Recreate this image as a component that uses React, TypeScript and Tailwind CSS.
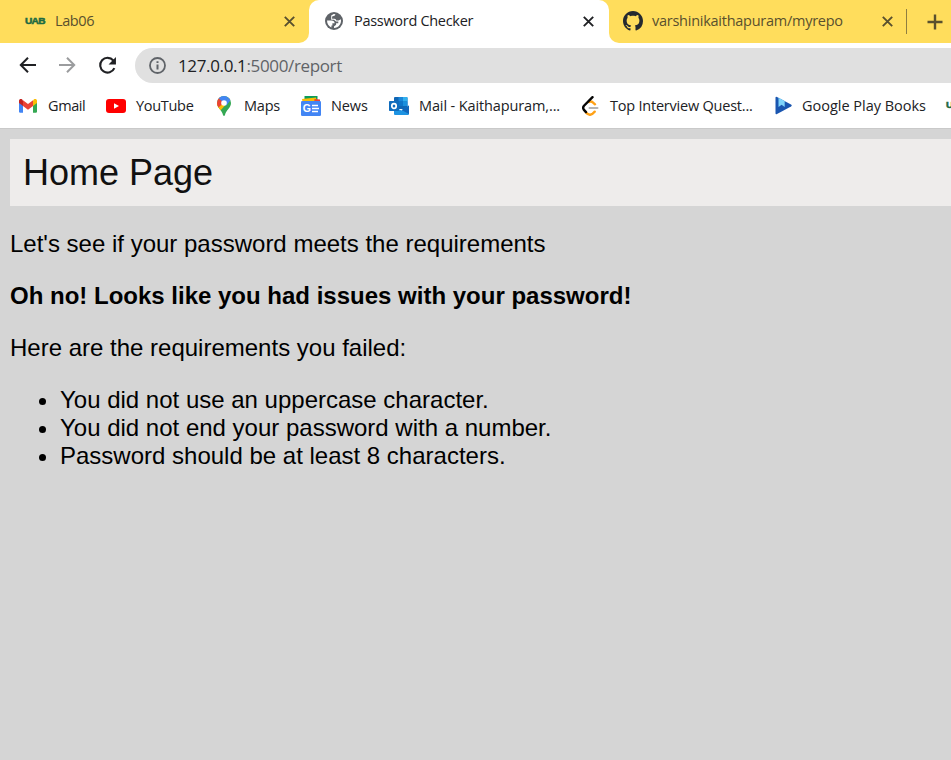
import React from 'react';

type IconProps = { className: string };

function Uab() {
  return (
    <span className="flex h-2 w-5 shrink-0 items-center">
      <span className="origin-left scale-x-[1.12] font-['Liberation_Sans',Arial,sans-serif] text-[9px] font-black leading-none tracking-[-0.6px] text-[#1e6b42] [-webkit-text-stroke:0.5px_#1e6b42]">
        UAB
      </span>
    </span>
  );
}

function Close({ className }: IconProps) {
  return (
    <svg viewBox="0 0 11 11" className={className} fill="none" stroke="currentColor" strokeWidth="1.9">
      <path d="M.8.8l9.400 9.400M10.200.8L.8 10.200" />
    </svg>
  );
}

function Globe({ className }: IconProps) {
  return (
    <svg viewBox="0 0 18 18" className={className}>
      <circle cx="9" cy="9" r="9" fill="#5f6368" />
      <path d="M2 8.600h4.200c2.300 0 3.400 1 3.400 2.700H7.400v2.200h-1v1.900C3.700 14.300 2 12 2 8.600z" fill="#fff" />
      <path d="M10.400 2.100V4.200c0 .7-.5 1.200-1.200 1.200H7.800v1.800h2.400c.8 0 1.400.5 1.400 1.300v.6h1.600c1 0 1.700-.5 2.600-1.400C16.700 12 13.500 16 9 16v-1.500l2.300-1.800" fill="none" />
      <path d="M8.700 2q1 0 1.700.2-.1 1.600-1.800 1.900L7.100 4.500v2.300h2.300q1.700.2 1.900 1.700h2.300l2.300-1.200C16.700 12 13.500 15.900 9 16v-1.500l2.100-1.800v-1.400h2.200V9.600h-2.200L9 7.800H6.200V3.500z" fill="#fff" />
    </svg>
  );
}

function Github({ className }: IconProps) {
  return (
    <svg viewBox="0 0 16 16" className={className} fill="#24292f">
      <path d="M8 0C3.580 0 0 3.580 0 8c0 3.540 2.290 6.530 5.470 7.590.4.070.55-.17.55-.38 0-.19-.01-.82-.01-1.490-2.010.37-2.530-.49-2.690-.94-.09-.23-.48-.94-.82-1.130-.28-.15-.68-.52-.01-.53.63-.01 1.080.58 1.230.82.72 1.210 1.870.87 2.330.66.070-.52.28-.87.51-1.070-1.780-.2-3.640-.89-3.640-3.950 0-.87.31-1.590.82-2.150-.08-.2-.36-1.020.08-2.120 0 0 .67-.21 2.200.82.64-.18 1.320-.27 2-.27s1.360.09 2 .27c1.530-1.040 2.200-.82 2.200-.82.44 1.100.16 1.920.08 2.120.51.56.82 1.270.82 2.150 0 3.070-1.870 3.750-3.650 3.950.29.25.54.73.54 1.480 0 1.070-.01 1.930-.01 2.200 0 .21.15.46.55.38A8.010 8.010 0 0 0 16 8c0-4.420-3.580-8-8-8z" />
    </svg>
  );
}

function Arrow({ className }: IconProps) {
  return (
    <svg viewBox="0 0 17 16" className={className} fill="none" stroke="currentColor" strokeWidth="2">
      <path d="M17 8H2M9 .8L1.800 8 9 15.200" />
    </svg>
  );
}

function Reload({ className }: IconProps) {
  return (
    <svg viewBox="0 0 18 18" className={className}>
      <path d="M14.500 4.300A7 7 0 1 0 15.500 11.500" fill="none" stroke="#202124" strokeWidth="2" />
      <path d="M17 1v7h-7z" fill="#202124" />
    </svg>
  );
}

function Info({ className }: IconProps) {
  return (
    <svg viewBox="0 0 17 17" className={className}>
      <circle cx="8.500" cy="8.500" r="7.500" fill="none" stroke="#5f6368" strokeWidth="1.800" />
      <path d="M7.500 7.500h2v5h-2zM7.500 4.200h2V6h-2z" fill="#5f6368" />
    </svg>
  );
}

function Gmail({ className }: IconProps) {
  return (
    <svg viewBox="0 0 18 14" className={className}>
      <path d="M0 3v9.500q0 1.200 1.200 1.200H4V6z" fill="#4285f4" />
      <path d="M18 3v9.500q0 1.200-1.200 1.200H14V6z" fill="#34a853" />
      <path d="M14 1.500V7l4-3V2c0-2-2-2.500-3.200-1.500z" fill="#fbbc04" />
      <path d="M4 1.500V7L0 4V2C0 0 2-.5 3.200.5z" fill="#c5221f" />
      <path d="M4 7V1.200l5 3.800 5-3.800V7l-5 3.800z" fill="#ea4335" />
    </svg>
  );
}

function YouTube({ className }: IconProps) {
  return (
    <svg viewBox="0 0 20 14" className={className}>
      <rect width="20" height="14" rx="3" fill="#f00" />
      <path d="M8 4.200l5 2.800-5 2.800z" fill="#fff" />
    </svg>
  );
}

function MapPin({ className }: IconProps) {
  return (
    <svg viewBox="0 0 14 20" className={className}>
      <defs>
        <clipPath id="pin">
          <path d="M7 0a7 7 0 0 1 7 7c0 5-5 7-6 12q-1 2-2 0C5 14 0 12 0 7a7 7 0 0 1 7-7z" />
        </clipPath>
      </defs>
      <g clipPath="url(#pin)">
        <path d="M0 0h14v20H0z" fill="#34a853" />
        <path d="M0 6l7 1 5.500-6L14 3 2.500 15.500 0 12z" fill="#fbbc04" />
        <path d="M0 0h3l4 6.500L1.500 11.500 0 10z" fill="#ea4335" />
        <path d="M1.700 2.300L7 7l4.800-5.500L9 0H3z" fill="#4285f4" />
        <path d="M7 7l4.800-5.500L14 3.500 9 10z" fill="#4285f4" />
      </g>
      <circle cx="7" cy="7" r="2.800" fill="#fff" />
    </svg>
  );
}

function News({ className }: IconProps) {
  return (
    <svg viewBox="0 0 20 20" className={className}>
      <path d="M3.500 0h13v7h-13z" fill="#0c9d58" />
      <path d="M1 3l14-1.500 1 6.500H2z" fill="#fbbc04" />
      <path d="M13.500 3l5.500.5V8h-6z" fill="#ea4335" />
      <rect y="5" width="20" height="15" rx="1.300" fill="#4285f4" />
      <text x="1.700" y="16" fill="#fff" className="font-['Liberation_Sans',Arial,sans-serif] text-[10.5px] font-bold">G</text>
      <path d="M11 9.500h6M11 12.500h7M11 15.500h6" stroke="#fff" strokeWidth="1.700" />
    </svg>
  );
}

function Outlook({ className }: IconProps) {
  return (
    <svg viewBox="0 0 20 18" className={className}>
      <path d="M5 1q0-1 1-1h11.500q1 0 1 1v11H5z" fill="#1066b5" />
      <path d="M9.500 0h4.500v4.500H9.500z" fill="#1a86d9" />
      <path d="M14 0h3.500q1 0 1 1v3.500H14z" fill="#33b0ee" />
      <path d="M14 4.500h4.500V9H14z" fill="#1b8fdd" />
      <path d="M9.500 4.500H14V9H9.500z" fill="#0f75c8" />
      <path d="M5 10l7.500 3.500L20 8.500V17q0 1-1 1H6q-1 0-1-1z" fill="#1d93e2" />
      <path d="M20 8.500V17l-7.500-4z" fill="#1166bb" />
      <rect y="4" width="10" height="10" rx=".8" fill="#0f6cbd" />
      <ellipse cx="5" cy="9" rx="2.200" ry="2.400" fill="none" stroke="#fff" strokeWidth="1.700" />
    </svg>
  );
}

function LeetCode({ className }: IconProps) {
  return (
    <svg viewBox="0 0 17 20" className={className} fill="none" strokeWidth="2.400" strokeLinecap="round">
      <path d="M7 6q2-1.200 3.800.3l2.200 2M4 16.500l1.800 1.600q2.200 1.400 4.400 0l2.500-2.400" stroke="#ffa116" />
      <path d="M10.500 1.200L2 9.700q-1.700 2 0 4.200l2 2.200" stroke="#070706" />
      <path d="M7.500 12h8" stroke="#b3b3b3" strokeWidth="2" />
    </svg>
  );
}

function PlayBooks({ className }: IconProps) {
  return (
    <svg viewBox="0 0 17 19" className={className}>
      <path d="M.5 1.800Q.5.200 2 .9L16 8.400q1.500 1 0 2L2 18Q.5 18.700.5 17.200z" fill="#1a56b0" />
      <path d="M3.500 1.700l6.200 3.400v6L6.600 8.800l-3.100 2.300z" fill="#7fd4fb" />
    </svg>
  );
}

const label = "whitespace-nowrap font-['Open_Sans','Noto_Sans',sans-serif] text-[14.5px] leading-5";

function Bookmark({ icon, iconBox, text, box }: { icon: React.ReactNode; iconBox: string; text: string; box: string }) {
  return (
    <div className="flex shrink-0 items-center">
      <div className={`flex shrink-0 items-center ${iconBox}`}>{icon}</div>
      <span className={`shrink-0 text-[#202124] ${label} ${box}`}>{text}</span>
    </div>
  );
}

export default function App() {
  return (
    <div className="flex h-[760px] w-[951px] flex-col overflow-hidden bg-[#d5d5d5]">
      <header className="shrink-0 bg-white">
        <div className="flex h-[43px] bg-white text-[#59502e]">
          <div className="flex w-[309px] items-center rounded-br-[10px] bg-[#ffdd5c] pl-[25px] pr-[14px]">
            <Uab />
            <span className={`mb-px ml-[10px] tracking-[-0.4px] ${label}`}>Lab06</span>
            <Close className="ml-auto size-[11px]" />
          </div>
          <div className="w-[300px] bg-[#ffdd5c]">
            <div className="flex h-[43px] items-center rounded-t-[10px] bg-white pl-4 pr-[15px] text-[#202124]">
              <Globe className="mb-px size-[18px]" />
              <span className={`mb-px ml-[11px] tracking-[-0.3px] ${label}`}>Password Checker</span>
              <Close className="ml-auto size-[11px]" />
            </div>
          </div>
          <div className="flex flex-1 items-center rounded-bl-[10px] bg-[#ffdd5c] pl-[14px]">
            <Github className="mb-px size-5" />
            <span className={`mb-px ml-[9px] w-[230px] tracking-[-0.26px] ${label}`}>varshinikaithapuram/myrepo</span>
            <Close className="size-[11px]" />
            <div className="ml-[13px] h-[25px] w-px bg-[#8f7e40]" />
            <svg viewBox="0 0 16 16" className="ml-5 size-4 shrink-0" stroke="currentColor" strokeWidth="2.400">
              <path d="M8 0.500v15M.5 8h15" />
            </svg>
          </div>
        </div>

        <div className="flex h-[45px] items-center pl-[19px]">
          <Arrow className="mb-px h-4 w-[17px] text-[#202124]" />
          <Arrow className="mb-px ml-[23px] h-4 w-[17px] rotate-180 text-[#9b9c9e]" />
          <Reload className="ml-[22px] size-[19px]" />
          <div className="ml-[18px] flex h-[35px] flex-1 items-center rounded-l-full bg-[#e0e0e0] pl-[14px]">
            <Info className="size-[17px]" />
            <span className="ml-3 whitespace-nowrap font-['Open_Sans','Noto_Sans',sans-serif] text-[17px] leading-6 tracking-[-0.36px] text-[#606367]">
              <span className="text-[#202124]">127.0.0.1</span>:5000/report
            </span>
          </div>
        </div>

        <div className="flex h-[41px] items-center border-b border-[#c9c9c9] pb-[5px] pl-[19px]">
          <Bookmark icon={<Gmail className="h-[14px] w-[18px]" />} iconBox="w-[29px]" text="Gmail" box="w-[58px] tracking-[-0.4px]" />
          <Bookmark icon={<YouTube className="h-[14px] w-5" />} iconBox="w-[30px]" text="YouTube" box="w-[81px] tracking-[-0.3px]" />
          <Bookmark icon={<MapPin className="h-5 w-[14px]" />} iconBox="w-[27px]" text="Maps" box="w-[57px] tracking-[-0.2px]" />
          <Bookmark icon={<News className="size-5" />} iconBox="w-[30px]" text="News" box="w-[58px] tracking-[-0.1px]" />
          <Bookmark icon={<Outlook className="h-[18px] w-5" />} iconBox="w-[30px]" text="Mail - Kaithapuram,..." box="w-[163px] tracking-[-0.12px]" />
          <Bookmark icon={<LeetCode className="h-5 w-[17px]" />} iconBox="w-[28px]" text="Top Interview Quest..." box="w-[165px] tracking-[-0.22px]" />
          <Bookmark icon={<PlayBooks className="h-[19px] w-[17px]" />} iconBox="w-[27px]" text="Google Play Books" box="w-[144px] tracking-[-0.02px]" />
          <Uab />
        </div>
      </header>

      <main className="pl-[10px] pt-[10px] font-['Liberation_Sans',Arial,sans-serif] text-2xl leading-7 text-black">
        <div className="flex h-[67px] items-center bg-[#eeeceb] pl-[13px] text-4xl text-[#111]">Home Page</div>
        <p className="mt-6">Let's see if your password meets the requirements</p>
        <p className="mt-6 font-bold">Oh no! Looks like you had issues with your password!</p>
        <p className="mt-6">Here are the requirements you failed:</p>
        <ul className="mt-6 list-disc pl-[50px]">
          <li>You did not use an uppercase character.</li>
          <li>You did not end your password with a number.</li>
          <li>Password should be at least 8 characters.</li>
        </ul>
      </main>
    </div>
  );
}
